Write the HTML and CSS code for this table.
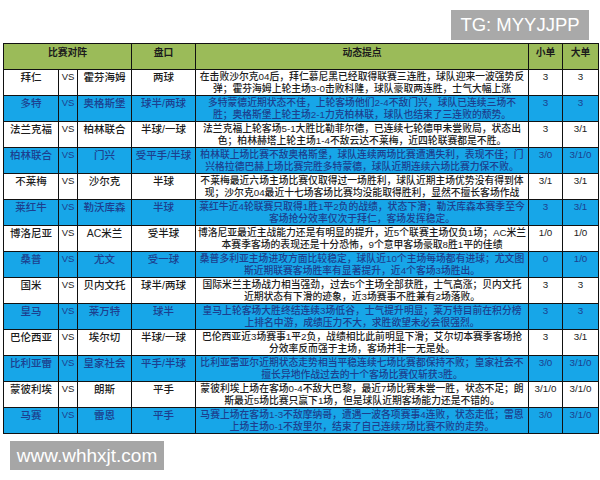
FILE: index.html
```html
<!DOCTYPE html>
<html lang="zh">
<head>
<meta charset="utf-8">
<link rel="stylesheet" href="styles.css">
</head>
<body>
<div class="topbar"><div class="tg">TG: MYYJJPP</div></div>
<table class="grid">
<colgroup>
<col class="c-home"><col class="c-vs"><col class="c-away"><col class="c-pan"><col class="c-note"><col class="c-s"><col class="c-b">
</colgroup>
<thead>
<tr><th colspan="3">比赛对阵</th><th>盘口</th><th>动态提点</th><th>小单</th><th>大单</th></tr>
</thead>
<tbody>
<tr><td class="t">拜仁</td><td class="vs">VS</td><td class="t">霍芬海姆</td><td class="t">两球</td><td class="note">在击败沙尔克04后，拜仁慕尼黑已经取得联赛三连胜，球队迎来一波强势反<br>弹；霍芬海姆上轮主场3-0击败科隆，球队豪取两连胜，士气大幅上涨</td><td>3</td><td>3</td></tr>
<tr class="blue"><td class="t">多特</td><td class="vs">VS</td><td class="t">奥格斯堡</td><td class="t">球半/两球</td><td class="note">多特蒙德近期状态不佳，上轮客场他们2-4不敌门兴，球队已连续三场不<br>胜；奥格斯堡上轮主场2-1力克柏林联，球队也结束了三连败的颓势。</td><td>3</td><td>3</td></tr>
<tr><td class="t">法兰克福</td><td class="vs">VS</td><td class="t">柏林联合</td><td class="t">半球/一球</td><td class="note">法兰克福上轮客场5-1大胜比勒菲尔德，已连续七轮德甲未尝败局，状态出<br>色；柏林赫塔上轮主场1-4不敌云达不莱梅，近四轮联赛都是不胜。</td><td>3</td><td>3/1</td></tr>
<tr class="blue"><td class="t">柏林联合</td><td class="vs">VS</td><td class="t">门兴</td><td class="t">受平手/半球</td><td class="note">柏林联上场比赛不敌奥格斯堡，球队连续两场比赛遭遇失利，表现不佳；门<br>兴格拉德巴赫上场比赛完胜多特蒙德，球队近期连续六场比赛力保不败。</td><td>3/0</td><td>3/1/0</td></tr>
<tr><td class="t">不莱梅</td><td class="vs">VS</td><td class="t">沙尔克</td><td class="t">半球</td><td class="note">不莱梅最近六场主场比赛仅取得过一场胜利，球队近期主场优势没有得到体<br>现；沙尔克04最近十七场客场比赛均没能取得胜利，显然不擅长客场作战</td><td>3/1</td><td>3/1</td></tr>
<tr class="blue"><td class="t">莱红牛</td><td class="vs">VS</td><td class="t">勒沃库森</td><td class="t">半球</td><td class="note">莱红牛近4轮联赛只取得1胜1平2负的战绩，状态下滑；勒沃库森本赛季至今<br>客场抢分效率仅次于拜仁，客场发挥稳定。</td><td>3</td><td>3/1</td></tr>
<tr><td class="t">博洛尼亚</td><td class="vs">VS</td><td class="t">AC米兰</td><td class="t">受半球</td><td class="note">博洛尼亚最近主战能力还是有明显的提升，近5个联赛主场仅负1场；AC米兰<br>本赛季客场的表现还是十分恐怖，9个意甲客场豪取8胜1平的佳绩</td><td>1/0</td><td>1/0</td></tr>
<tr class="blue"><td class="t">桑普</td><td class="vs">VS</td><td class="t">尤文</td><td class="t">受一球</td><td class="note">桑普多利亚主场进攻方面比较稳定，球队近10个主场每场都有进球；尤文图<br>斯近期联赛客场胜率有显著提升，近4个客场3场胜出。</td><td>0</td><td>1/0</td></tr>
<tr><td class="t">国米</td><td class="vs">VS</td><td class="t">贝内文托</td><td class="t">球半/两球</td><td class="note">国际米兰主场战力相当强劲，过去5个主场全部获胜，士气高涨；贝内文托<br>近期状态有下滑的迹象，近3场赛事不胜兼有2场落败。</td><td>3</td><td>3</td></tr>
<tr class="blue"><td class="t">皇马</td><td class="vs">VS</td><td class="t">莱万特</td><td class="t">球半</td><td class="note">皇马上轮客场大胜终结连续3场低谷，士气提升明显；莱万特目前在积分榜<br>上排名中游，成绩压力不大，求胜欲望未必会很强烈。</td><td>3</td><td>3</td></tr>
<tr><td class="t">巴伦西亚</td><td class="vs">VS</td><td class="t">埃尔切</td><td class="t">半球/一球</td><td class="note">巴伦西亚近3场赛事1平2负，战绩相比此前明显下滑；艾尔切本赛季客场抢<br>分效率反而强于主场，客场并非一无是处。</td><td>3</td><td>3/1</td></tr>
<tr class="blue"><td class="t">比利亚雷</td><td class="vs">VS</td><td class="t">皇家社会</td><td class="t">平手/半球</td><td class="note">比利亚雷亚尔近期状态走势相当平稳连续七场比赛都保持不败；皇家社会不<br>擅长异地作战过去的十个客场比赛仅斩获3胜。</td><td>3/0</td><td>3/1/0</td></tr>
<tr><td class="t">蒙彼利埃</td><td class="vs">VS</td><td class="t">朗斯</td><td class="t">平手</td><td class="note">蒙彼利埃上场在客场0-4不敌大巴黎，最近7场比赛未尝一胜，状态不足；朗<br>斯最近5场比赛只赢下1场，但是球队近期客场能力还是不错的。</td><td>3/1/0</td><td>3/1/0</td></tr>
<tr class="blue"><td class="t">马赛</td><td class="vs">VS</td><td class="t">雷恩</td><td class="t">平手</td><td class="note">马赛上场在客场1-3不敌摩纳哥，遭遇一波各项赛事4连败，状态走低；雷恩<br>上场主场0-1不敌里尔，结束了自己连续7场比赛不败的走势。</td><td>3/0</td><td>3/1/0</td></tr>
</tbody>
</table>
<div class="site">www.whhxjt.com</div>
</body>
</html>
```

FILE: styles.css
```css
html, body {
  margin: 0;
  padding: 0;
  background: #ffffff;
}
body {
  width: 600px;
  height: 480px;
  overflow: hidden;
  font-family: "Liberation Sans", "Noto Sans CJK SC", sans-serif;
}
.topbar {
  display: flex;
  justify-content: flex-end;
  padding: 10px 11px 0 0;
  height: 30px;
}
.tg {
  width: 138px;
  height: 30px;
  background: #a9a9a9;
  color: #ffffff;
  font-size: 18.5px;
  line-height: 30px;
  text-align: center;
}
.grid {
  margin: 3px 0 0 3px;
  width: 595px;
  border-collapse: collapse;
  table-layout: fixed;
  font-size: 9.8px;
  color: #1c1c1c;
}
.c-home { width: 55px; }
.c-vs { width: 19px; }
.c-away { width: 54px; }
.c-pan { width: 64px; }
.c-note { width: 333px; }
.c-s { width: 34px; }
.c-b { width: 36px; }
.grid th, .grid td {
  border: 1px solid #111111;
  padding: 0;
  text-align: center;
  vertical-align: top;
  white-space: nowrap;
  overflow: hidden;
  box-sizing: border-box;
}
.grid th {
  background: #9bbb59;
  height: 26px;
  font-weight: 700;
  line-height: 16px;
  padding-top: 1px;
}
.grid td {
  height: 26px;
  line-height: 12px;
  padding-top: 1px;
}
.grid td.note {
  font-weight: 500;
}
.grid td.t {
  font-size: 10.5px;
  font-weight: 500;
}
.grid td.vs {
  font-size: 9.5px;
  font-weight: 500;
}
.grid tr.blue td {
  background: #17a6e8;
  color: #1d3f8e;
}
.site {
  margin: 7px 0 0 10px;
  width: 154px;
  height: 29px;
  background: #a6a6a6;
  color: #ffffff;
  font-size: 19px;
  line-height: 29px;
  text-align: center;
}
```
